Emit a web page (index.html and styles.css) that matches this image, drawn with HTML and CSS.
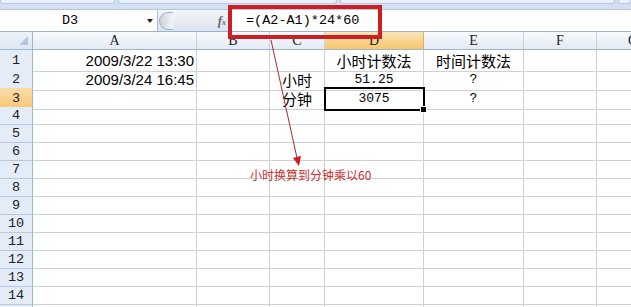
FILE: index.html
```html
<!DOCTYPE HTML>
<html lang="zh-CN">
  <head>
    <title>小时计数法</title>
    <meta charset="utf-8">
    <link rel="stylesheet" href="styles.css">
  </head>
  <body>

  <div class="ribbon-edge">
    <span class="tab t1"></span><span class="tab t2"></span><span class="tab t3"></span><span class="tab t4"></span>
  </div>

  <div class="formula-row">
    <div class="namebox"><span class="ref">D3</span><span class="drop"></span></div>
    <div class="splitter"><span class="knob"></span><span class="fx">f<small>x</small></span></div>
    <div class="formula">=(A2-A1)*24*60</div>
  </div>

  <div class="sheet">
    <div class="row head">
      <div class="corner"></div>
      <div class="ch">A</div><div class="ch">B</div><div class="ch">C</div><div class="ch on">D</div><div class="ch">E</div><div class="ch">F</div><div class="ch">G</div>
    </div>
    <div class="row tall">
      <div class="rh">1</div>
      <div class="cell num">2009/3/22 13:30</div><div class="cell"></div><div class="cell"></div><div class="cell mid cjk">小时计数法</div><div class="cell mid cjk">时间计数法</div><div class="cell"></div><div class="cell"></div>
    </div>
    <div class="row tall">
      <div class="rh">2</div>
      <div class="cell num">2009/3/24 16:45</div><div class="cell"></div><div class="cell mid cjk">小时</div><div class="cell mid mono">51.25</div><div class="cell mid mono">?</div><div class="cell"></div><div class="cell"></div>
    </div>
    <div class="row tall">
      <div class="rh on">3</div>
      <div class="cell"></div><div class="cell"></div><div class="cell mid cjk">分钟</div><div class="cell mid mono sel">3075</div><div class="cell mid mono">?</div><div class="cell"></div><div class="cell"></div>
    </div>
    <div class="row"><div class="rh">4</div><div class="cell"></div><div class="cell"></div><div class="cell"></div><div class="cell"></div><div class="cell"></div><div class="cell"></div><div class="cell"></div></div>
    <div class="row"><div class="rh">5</div><div class="cell"></div><div class="cell"></div><div class="cell"></div><div class="cell"></div><div class="cell"></div><div class="cell"></div><div class="cell"></div></div>
    <div class="row"><div class="rh">6</div><div class="cell"></div><div class="cell"></div><div class="cell"></div><div class="cell"></div><div class="cell"></div><div class="cell"></div><div class="cell"></div></div>
    <div class="row"><div class="rh">7</div><div class="cell"></div><div class="cell"></div><div class="cell"></div><div class="cell"></div><div class="cell"></div><div class="cell"></div><div class="cell"></div></div>
    <div class="row"><div class="rh">8</div><div class="cell"></div><div class="cell"></div><div class="cell"></div><div class="cell"></div><div class="cell"></div><div class="cell"></div><div class="cell"></div></div>
    <div class="row"><div class="rh">9</div><div class="cell"></div><div class="cell"></div><div class="cell"></div><div class="cell"></div><div class="cell"></div><div class="cell"></div><div class="cell"></div></div>
    <div class="row"><div class="rh">10</div><div class="cell"></div><div class="cell"></div><div class="cell"></div><div class="cell"></div><div class="cell"></div><div class="cell"></div><div class="cell"></div></div>
    <div class="row"><div class="rh">11</div><div class="cell"></div><div class="cell"></div><div class="cell"></div><div class="cell"></div><div class="cell"></div><div class="cell"></div><div class="cell"></div></div>
    <div class="row"><div class="rh">12</div><div class="cell"></div><div class="cell"></div><div class="cell"></div><div class="cell"></div><div class="cell"></div><div class="cell"></div><div class="cell"></div></div>
    <div class="row"><div class="rh">13</div><div class="cell"></div><div class="cell"></div><div class="cell"></div><div class="cell"></div><div class="cell"></div><div class="cell"></div><div class="cell"></div></div>
    <div class="row"><div class="rh">14</div><div class="cell"></div><div class="cell"></div><div class="cell"></div><div class="cell"></div><div class="cell"></div><div class="cell"></div><div class="cell"></div></div>
    <div class="row"><div class="rh"></div><div class="cell"></div><div class="cell"></div><div class="cell"></div><div class="cell"></div><div class="cell"></div><div class="cell"></div><div class="cell"></div></div>
  </div>

  <!-- annotation drawn over the sheet -->
  <div class="callout"></div>
  <svg class="arrow" width="631" height="307" viewBox="0 0 631 307">
    <line x1="271" y1="40" x2="297" y2="158" stroke="#a82a2a" stroke-width="1"/>
    <polygon points="299,166 301,156 293,158" fill="#d4181c"/>
  </svg>
  <div class="note">小时换算到分钟乘以60</div>

  </body>
</html>
```

FILE: styles.css
```css
* {
  box-sizing: border-box;
}
html, body {
  margin: 0;
  padding: 0;
}
body {
  width: 631px;
  height: 307px;
  overflow: hidden;
  position: relative;
  background: #fff;
  color: #000;
  font-family: "Liberation Sans", "Noto Sans CJK SC", sans-serif;
}

/* bottom edge of the ribbon */
.ribbon-edge {
  height: 9px;
  display: flex;
  gap: 3px;
  align-items: flex-start;
  background: #d3e0f1;
}
.tab {
  height: 4px;
  background: #eaf1fa;
  border: 1px solid #b8c9e0;
  border-top: 0;
  border-radius: 0 0 3px 3px;
}
.t1 { width: 115px; }
.t2 { width: 219px; }
.t3 { width: 275px; }
.t4 { flex: 1; }

/* name box + formula bar */
.formula-row {
  display: flex;
  height: 23px;
  background: #dfe8f5;
  border-top: 1px solid #b6c6dc;
  border-bottom: 1px solid #9db1cb;
}
.namebox {
  width: 158px;
  display: flex;
  align-items: center;
  background: #fff;
  border-right: 1px solid #a8bcd5;
}
.ref {
  width: 140px;
  text-align: center;
  font: 13.5px "Liberation Mono", monospace;
}
.drop {
  margin-left: 7px;
  border-left: 3px solid transparent;
  border-right: 3px solid transparent;
  border-top: 4px solid #222;
}
.splitter {
  width: 70px;
  display: flex;
  align-items: center;
  background: linear-gradient(#f4f7fb, #dae3ef);
}
.knob {
  width: 14px;
  height: 18px;
  margin-left: 1px;
  border: 1px solid #a3b0c0;
  border-right: 0;
  border-radius: 9px 0 0 9px;
  background: linear-gradient(90deg, #c9d2dc, #f3f5f8);
}
.fx {
  margin-left: auto;
  margin-right: 2px;
  font: italic bold 13px "Liberation Serif", serif;
  color: #6b6b6b;
}
.fx small {
  font-size: 8px;
}
.formula {
  flex: 1;
  display: flex;
  align-items: center;
  padding-left: 17px;
  background: #fff;
  border-left: 1px solid #9db1cb;
  font: 13.5px "Liberation Mono", monospace;
}

/* worksheet grid */
.row {
  display: grid;
  grid-template-columns: 33px 164px 73px 55px 99px 100px 73px 73px;
  height: 18px;
}
.row.tall {
  height: 19px;
}
.corner {
  position: relative;
  background: linear-gradient(#eef3fa, #dde6f2);
  border-right: 1px solid #9eb6ce;
  border-bottom: 1px solid #9eb6ce;
}
.corner::after {
  content: "";
  position: absolute;
  right: 4px;
  bottom: 4px;
  border-left: 9px solid transparent;
  border-bottom: 9px solid #b5c6dc;
}
.ch {
  display: flex;
  align-items: center;
  justify-content: center;
  background: linear-gradient(#f8fafd, #e3eaf4);
  border-right: 1px solid #c6d2e0;
  border-bottom: 1px solid #9eb6ce;
  font: 14px "Liberation Serif", serif;
  color: #222;
}
.ch.on {
  background: linear-gradient(#fbe4b8, #f6c66c);
  border-right-color: #e0b060;
}
.rh {
  display: flex;
  align-items: center;
  justify-content: center;
  background: #e4ecf7;
  border-right: 1px solid #9eb6ce;
  border-bottom: 1px solid #b7c9dd;
  font: 13.5px "Liberation Mono", monospace;
  color: #222;
}
.rh.on {
  background: linear-gradient(#fbdba6, #f7c877);
}
.cell {
  display: flex;
  align-items: center;
  padding: 0 2px;
  white-space: nowrap;
  border-right: 1px solid #cdd1d7;
  border-bottom: 1px solid #cdd1d7;
  font-size: 15px;
}
.num {
  justify-content: flex-end;
}
.mid {
  justify-content: center;
}
.cjk {
  font: 15px "Noto Sans CJK SC", sans-serif;
}
.mono {
  font: 13px "Liberation Mono", monospace;
}
.sel {
  position: relative;
}
.sel::after {
  content: "";
  position: absolute;
  top: -1px;
  left: -1px;
  right: -2px;
  bottom: -2px;
  border: 2px solid #000;
}
.sel::before {
  content: "";
  position: absolute;
  right: -4px;
  bottom: -4px;
  width: 5px;
  height: 5px;
  background: #000;
  border: 1px solid #fff;
  z-index: 1;
}

/* red annotation */
.callout {
  position: absolute;
  left: 228px;
  top: 5px;
  width: 154px;
  height: 34px;
  border: 4px solid #cc1f25;
}
.arrow {
  position: absolute;
  left: 0;
  top: 0;
  pointer-events: none;
}
.note {
  position: absolute;
  left: 250px;
  top: 166px;
  font: 12px "Noto Sans CJK SC", sans-serif;
  color: #c8302c;
}
```
